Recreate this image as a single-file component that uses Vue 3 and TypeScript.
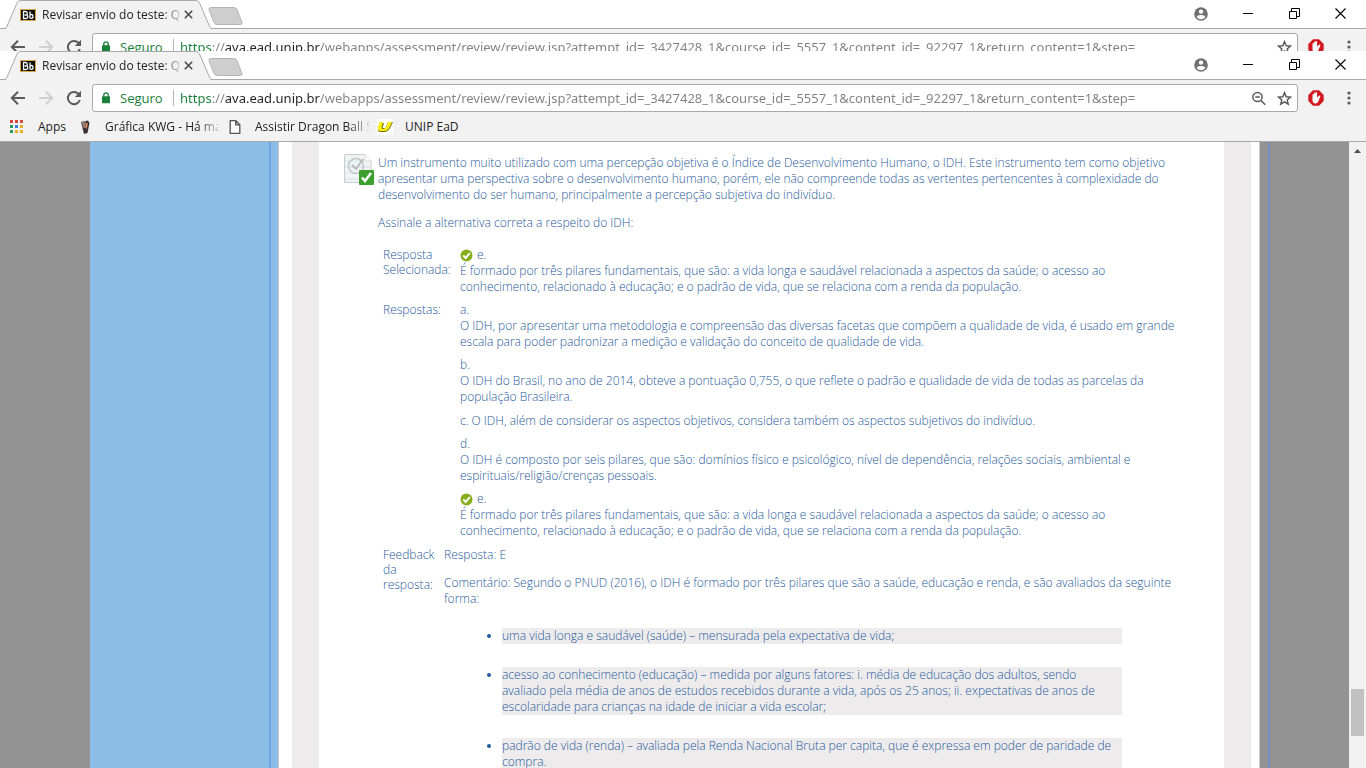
<script setup lang="ts">
interface BrowserWindow {
  id: string
  front: boolean
}

interface Answer {
  letter: string
  text: string
  correct?: boolean
  inline?: boolean
}

const windows: BrowserWindow[] = [
  { id: 'back', front: false },
  { id: 'front', front: true },
]

const tabTitle = 'Revisar envio do teste: QU'
const address =
  'https://ava.ead.unip.br/webapps/assessment/review/review.jsp?attempt_id=_3427428_1&course_id=_5557_1&content_id=_92297_1&return_content=1&step='

const appDots: string[] = [
  '#d8473c', '#d8473c', '#d8473c',
  '#2e9a5c', '#3f7fe0', '#e8b020',
  '#2e9a5c', '#e8b020', '#e8b020',
]

const correctText =
  'É formado por três pilares fundamentais, que são: a vida longa e saudável relacionada a aspectos da saúde; o acesso ao\nconhecimento, relacionado à educação; e o padrão de vida, que se relaciona com a renda da população.'

const selected: Answer = { letter: 'e.', text: correctText, correct: true }

const answers: Answer[] = [
  {
    letter: 'a.',
    text: 'O IDH, por apresentar uma metodologia e compreensão das diversas facetas que compõem a qualidade de vida, é usado em grande\nescala para poder padronizar a medição e validação do conceito de qualidade de vida.',
  },
  {
    letter: 'b.',
    text: 'O IDH do Brasil, no ano de 2014, obteve a pontuação 0,755, o que reflete o padrão e qualidade de vida de todas as parcelas da\npopulação Brasileira.',
  },
  {
    letter: 'c.',
    text: 'O IDH, além de considerar os aspectos objetivos, considera também os aspectos subjetivos do indivíduo.',
    inline: true,
  },
  {
    letter: 'd.',
    text: 'O IDH é composto por seis pilares, que são: domínios físico e psicológico, nível de dependência, relações sociais, ambiental e\nespirituais/religião/crenças pessoais.',
  },
  { letter: 'e.', text: correctText, correct: true },
]

const factors: string[] = [
  'uma vida longa e saudável (saúde) – mensurada pela expectativa de vida;',
  'acesso ao conhecimento (educação) – medida por alguns fatores: i. média de educação dos adultos, sendo\navaliado pela média de anos de estudos recebidos durante a vida, após os 25 anos; ii. expectativas de anos de\nescolaridade para crianças na idade de iniciar a vida escolar;',
  'padrão de vida (renda) – avaliada pela Renda Nacional Bruta per capita, que é expressa em poder de paridade de\ncompra.',
]
</script>

<template>
  <div class="screen">
    <header v-for="w in windows" :key="w.id" class="window" :class="w.id">
      <div class="strip">
        <div class="tab">
          <svg class="tab-shape" width="214" height="29" viewBox="0 0 214 29" aria-hidden="true">
            <path d="M0 28.5H4C6 28.5 6.500 27.500 7.500 25L17 3C18 1 18.500 .5 21 .5H195C198 .5 199 1.500 200 4L209 25C210 27.500 210.500 28.500 213 28.500" fill="#f2f2f2" stroke="#a9a9a9" />
            <path d="M6 28.5H210" stroke="#f2f2f2" />
          </svg>
          <svg class="fav" width="16" height="12" viewBox="0 0 16 12" aria-hidden="true">
            <rect x=".5" y=".5" width="15" height="11" fill="#0c0c0c" stroke="#d9a441" />
            <path d="M3.500 2.500V9.500H6Q8 9.300 7.800 7.500Q7.700 6.200 6.500 5.900Q7.400 5.400 7.300 4.200Q7.200 2.600 5.500 2.500ZM4.500 6H6M10 2.500V9.500M10 6Q13 4.500 13 7.500Q13 10 10 9" fill="none" stroke="#fff" stroke-width="1.300" />
          </svg>
          <span class="tab-title">{{ tabTitle }}</span>
          <button class="icon tab-close" type="button" aria-label="Fechar guia">
            <svg width="9" height="9" viewBox="0 0 9 9"><path d="M.8 .8L8.200 8.200M8.200 .8L.8 8.200" stroke="#4c4c4c" stroke-width="1.600" /></svg>
          </button>
        </div>
        <button class="icon new-tab" type="button" aria-label="Nova guia">
          <svg width="35" height="19" viewBox="0 0 35 19"><path d="M3 .5H26Q28 .5 29 2.500L34 15.500Q34.500 17.500 32.500 17.500H9Q7 17.500 6 15.500L1 3Q.5 .5 3 .5Z" fill="#cecece" stroke="#b4b4b4" /></svg>
        </button>
        <div class="controls">
          <button class="icon" type="button" aria-label="Perfil">
            <svg width="14" height="14" viewBox="0 0 14 14"><circle cx="7" cy="7" r="6.800" fill="#707070" /><circle cx="7" cy="4.600" r="2.200" fill="#fff" /><path d="M2.700 10Q3 7.900 7 7.900T11.300 10Q9.700 12.200 7 12.200T2.700 10Z" fill="#fff" /></svg>
          </button>
          <button class="icon" type="button" aria-label="Minimizar">
            <svg width="11" height="11" viewBox="0 0 11 11"><path d="M0 5.500H10" stroke="#000" /></svg>
          </button>
          <button class="icon" type="button" aria-label="Restaurar">
            <svg width="11" height="11" viewBox="0 0 11 11"><path d="M.5 3.500H7.500V10.500H.5ZM2.500 3V.5H10.500V8.500H8" fill="none" stroke="#000" /></svg>
          </button>
          <button class="icon" type="button" aria-label="Fechar">
            <svg width="11" height="11" viewBox="0 0 11 11"><path d="M.5 .5L10.500 10.500M10.500 .5L.5 10.500" stroke="#000" stroke-width="1.100" /></svg>
          </button>
        </div>
      </div>

      <div class="toolbar">
        <button class="icon nav" type="button" aria-label="Voltar">
          <svg width="16" height="16" viewBox="0 0 16 16"><path d="M15 8H2.500M8 1.800L1.800 8L8 14.200" fill="none" stroke="#5a5a5a" stroke-width="2" /></svg>
        </button>
        <button class="icon nav" type="button" aria-label="Avançar" disabled>
          <svg width="16" height="16" viewBox="0 0 16 16"><path d="M1 8H13.500M8 1.800L14.200 8L8 14.200" fill="none" stroke="#d0d0d0" stroke-width="2" /></svg>
        </button>
        <button class="icon nav" type="button" aria-label="Recarregar">
          <svg width="16" height="16" viewBox="0 0 16 16"><path d="M13.800 10A6.100 6.100 0 1 1 12.400 3.800L13 4.500" fill="none" stroke="#5a5a5a" stroke-width="2" /><path d="M15 .8V7H8.800Z" fill="#5a5a5a" /></svg>
        </button>
        <div class="omnibox">
          <svg class="lock" width="8" height="12" viewBox="0 0 8 12" aria-hidden="true"><path d="M1.800 5V3A2.200 2.200 0 0 1 6.200 3V5" fill="none" stroke="#188038" stroke-width="1.300" /><rect y="4.300" width="8" height="7" rx=".8" fill="#188038" /></svg>
          <span class="secure">Seguro</span>
          <input class="url" type="text" :value="address" aria-label="Endereço" spellcheck="false" />
          <button v-if="w.front" class="icon" type="button" aria-label="Zoom">
            <svg width="15" height="15" viewBox="0 0 15 15"><circle cx="5.500" cy="6" r="4.600" fill="none" stroke="#5a5a5a" stroke-width="1.500" /><path d="M3.300 6H7.800M9 9.500L13.200 13.700" stroke="#5a5a5a" stroke-width="1.600" /></svg>
          </button>
          <button class="icon" type="button" aria-label="Favoritar">
            <svg width="15" height="15" viewBox="0 0 15 15"><path d="M7.500 1.700L9.200 5.700L13.500 6.100L10.200 9L11.200 13.200L7.500 10.900L3.800 13.200L4.800 9L1.500 6.100L5.800 5.700Z" fill="none" stroke="#5a5a5a" stroke-width="1.500" /></svg>
          </button>
        </div>
        <button class="icon ext" type="button" aria-label="Extensão">
          <svg width="16" height="16" viewBox="0 0 16 16"><path d="M5 .3H11L15.700 5V11L11 15.700H5L.3 11V5Z" fill="#d3181f" /><path d="M4.500 8V4.500Q5.200 3.500 6 4.500V3Q6.800 2 7.500 3V2.500Q8.400 1.600 9.100 2.600V7.500L11.500 5.500Q12.600 5.300 12.300 6.400L10 12Q9 13.600 7 13.500Q4.500 13 4.500 10Z" fill="#fff" /></svg>
        </button>
        <button class="icon menu" type="button" aria-label="Menu">
          <svg width="4" height="14" viewBox="0 0 4 14" fill="#5a5a5a"><circle cx="2" cy="2" r="1.600" /><circle cx="2" cy="7" r="1.600" /><circle cx="2" cy="12" r="1.600" /></svg>
        </button>
      </div>

      <nav v-if="w.front" class="bookmarks">
        <a href="#" class="apps">
          <svg width="13" height="13" viewBox="0 0 13 13" aria-hidden="true"><rect v-for="(c, i) in appDots" :key="i" :x="(i % 3) * 5" :y="Math.floor(i / 3) * 5" width="3" height="3" :fill="c" /></svg>
          <span>Apps</span>
        </a>
        <a href="#" class="grafica">
          <svg width="16" height="16" viewBox="0 0 16 16" aria-hidden="true"><path d="M4 3L11 1.500L12.500 4L10.500 14L7 15Z" fill="#3a3038" /><path d="M4 3L8.500 2L9 4L8 9L6.500 9Z" fill="#8d7b78" /><path d="M9.500 4L11 4.500L9.500 10L8 8Z" fill="#e58a58" /></svg>
          <span class="fade">Gráfica KWG - Há ma</span>
        </a>
        <a href="#" class="dragon">
          <svg width="12" height="14" viewBox="0 0 12 14" aria-hidden="true"><path d="M1.200 .7H6.800L10.800 4.700V13.300H1.200ZM6.700 .7V4.800H10.800" fill="#fff" stroke="#555" stroke-width="1.300" /></svg>
          <span class="fade">Assistir Dragon Ball S</span>
        </a>
        <a href="#" class="unip">
          <svg width="16" height="16" viewBox="0 0 16 16" aria-hidden="true"><rect width="16" height="16" fill="#fff" /><path d="M3 4H7L5.500 9H8.500L11 3H16L13 9Q11.500 12.500 8 13H3Q0 12.500 1.200 9Z" fill="#77730c" /><path d="M2.500 3H6L4.500 8.500Q4.500 10 6.500 10Q8.500 9.500 9.500 7L11 3H15L12 9Q10.500 12 7.500 12H3Q0 11.500 1 8Z" fill="#f7ee18" /></svg>
          <span>UNIP EaD</span>
        </a>
      </nav>
    </header>

    <div class="viewport">
      <div class="gutter"></div>
      <aside class="side"></aside>
      <div class="frame">
        <main class="content">
          <svg class="question-icon" width="31" height="33" viewBox="0 0 31 33" aria-hidden="true">
            <path d="M2 1.500H22L28 8V29.500H1.500V3Q1.500 1.500 2 1.500Z" fill="#f1f4f5" stroke="#c9cccd" />
            <path d="M22 1.500V8H28" fill="#fff" stroke="#d5d7d8" />
            <path d="M2 8H21M2 14H27M2 20H16M2 26H15" stroke="#d3e4ea" />
            <circle cx="13" cy="13" r="7.500" fill="none" stroke="#c3c5c6" stroke-width="1.500" />
            <path d="M9 12L13 16L20 6" fill="none" stroke="#b9bbbc" stroke-width="2" />
            <rect x="16" y="17" width="15" height="15" rx="1" fill="#3d9f2d" />
            <path d="M19 24.500L22 28L28 20" fill="none" stroke="#fff" stroke-width="2.500" />
          </svg>
          <div class="question">
            <p>Um instrumento muito utilizado com uma percepção objetiva é o Índice de Desenvolvimento Humano, o IDH. Este instrumento tem como objetivo<br>apresentar uma perspectiva sobre o desenvolvimento humano, porém, ele não compreende todas as vertentes pertencentes à complexidade do<br>desenvolvimento do ser humano, principalmente a percepção subjetiva do indivíduo.</p>
            <p>Assinale a alternativa correta a respeito do IDH:</p>

            <dl class="rows">
              <div class="row">
                <dt>Resposta<br>Selecionada:</dt>
                <dd>
                  <div class="letter">
                    <svg class="ok" width="13" height="13" viewBox="0 0 13 13" aria-label="Correta"><circle cx="6.500" cy="6.500" r="6" fill="#86ad1c" /><path d="M3.300 6.500L5.700 9L9.800 4" fill="none" stroke="#fff" stroke-width="1.900" /></svg>{{ selected.letter }}
                  </div>
                  <div>{{ selected.text }}</div>
                </dd>
              </div>
              <div class="row">
                <dt>Respostas:</dt>
                <dd class="answers">
                  <div v-for="a in answers" :key="a.letter" :class="{ inline: a.inline }">
                    <div class="letter">
                      <svg v-if="a.correct" class="ok" width="13" height="13" viewBox="0 0 13 13" aria-label="Correta"><circle cx="6.500" cy="6.500" r="6" fill="#86ad1c" /><path d="M3.300 6.500L5.700 9L9.800 4" fill="none" stroke="#fff" stroke-width="1.900" /></svg>{{ a.letter }}
                    </div>
                    <div>{{ a.text }}</div>
                  </div>
                </dd>
              </div>
              <div class="row feedback">
                <dt>Feedback<br>da<br>resposta:</dt>
                <dd>
                  <p>Resposta: E</p>
                  <p>Comentário: Segundo o PNUD (2016), o IDH é formado por três pilares que são a saúde, educação e renda, e são avaliados da seguinte<br>forma:</p>
                  <ul>
                    <li v-for="f in factors" :key="f">{{ f }}</li>
                  </ul>
                </dd>
              </div>
            </dl>
          </div>
        </main>
      </div>
      <div class="gutter right"></div>
      <div class="scrollbar">
        <svg class="arrow" width="7" height="4" viewBox="0 0 7 4" aria-hidden="true"><path d="M0 4L3.500 0L7 4Z" fill="#505050" /></svg>
        <div class="thumb"></div>
      </div>
    </div>
  </div>
</template>

<style>
body {
  background: #fff;
}
</style>

<style scoped>
* {
  box-sizing: border-box;
}
.screen {
  display: flex;
  flex-direction: column;
  height: 100vh;
  overflow: hidden;
  font-family: "Open Sans", "Noto Sans", sans-serif;
  font-size: 12px;
}
.icon {
  display: flex;
  flex: none;
  padding: 0;
  border: 0;
  background: none;
}
.window {
  flex: none;
  overflow: hidden;
  background: #f2f2f2;
  color: #222;
}
.window.back {
  height: 51px;
}
.strip {
  display: flex;
  height: 29px;
  background: #fff;
  box-shadow: inset 0 -1px #a9a9a9;
}
.tab {
  position: relative;
  display: flex;
  align-items: center;
  width: 214px;
  padding-left: 20px;
}
.tab-shape {
  position: absolute;
  left: 0;
  top: 0;
}
.fav,
.tab-title,
.tab-close {
  position: relative;
  flex: none;
}
.tab-title {
  width: 137px;
  margin: 0 5px 0 6px;
  overflow: hidden;
  color: #222;
  white-space: nowrap;
  mask-image: linear-gradient(90deg, #000 120px, transparent 142px);
}
.new-tab {
  align-self: flex-start;
  margin: 7px 0 0 -6px;
}
.controls {
  display: flex;
  align-items: center;
  gap: 35px;
  margin-left: auto;
  padding: 0 20px 2px 0;
}
.toolbar {
  display: flex;
  align-items: center;
  height: 36px;
  padding: 0 15px 0 10px;
}
.nav {
  margin-right: 12px;
}
.nav:nth-child(3) {
  margin-right: 10px;
}
.omnibox {
  display: flex;
  flex: 1;
  align-items: center;
  gap: 10px;
  height: 28px;
  padding: 0 5px 0 9px;
  border: 1px solid #a9a9a9;
  border-radius: 3px;
  background: #fff;
  font-size: 13px;
}
.secure {
  width: 54px;
  margin-right: -4px;
  border-right: 1px solid #b5b5b5;
  color: #188038;
  line-height: 16px;
}
.url {
  flex: 1;
  min-width: 0;
  padding: 0;
  border: 0;
  outline: 0;
  font-family: "Noto Sans", "Open Sans", sans-serif;
  font-size: 13px;
  color: #808080;
  background: linear-gradient(90deg, #188038 32px, #808080 32px 45px, #222 45px 140px, #808080 140px);
  -webkit-background-clip: text;
  background-clip: text;
  -webkit-text-fill-color: transparent;
}
.ext {
  margin-left: 10px;
}
.menu {
  margin-left: 23px;
}
.bookmarks {
  display: flex;
  align-items: center;
  height: 26px;
  padding: 0 10px 4px;
  border-bottom: 1px solid #a9a9a9;
}
.bookmarks a {
  display: flex;
  flex: none;
  align-items: center;
  color: #222;
  text-decoration: none;
  white-space: nowrap;
}
.bookmarks .apps {
  gap: 15px;
  width: 67px;
}
.bookmarks .grafica {
  gap: 12px;
  width: 152px;
}
.bookmarks .dragon {
  gap: 14px;
  width: 148px;
}
.bookmarks .unip {
  gap: 12px;
}
.fade {
  width: 114px;
  overflow: hidden;
  mask-image: linear-gradient(90deg, #000 92px, transparent 118px);
}
.viewport {
  display: flex;
  flex: 1;
  min-height: 0;
  overflow: hidden;
  background: #fff;
}
.gutter {
  flex: none;
  width: 90px;
  background: #939393;
}
.gutter.right {
  width: 89px;
  padding-left: 8px;
}
.gutter.right::before {
  content: "";
  display: block;
  width: 2px;
  height: 100%;
  background: #7590c0;
}
.side {
  flex: none;
  width: 189px;
  padding-left: 179px;
  border-right: 1px solid #c9c9c9;
  background: #8bbde6;
}
.side::before {
  content: "";
  display: block;
  width: 2px;
  height: 100%;
  background: #6fa5e6;
}
.frame {
  display: flex;
  flex: 1;
  min-width: 0;
  padding: 0 8px 0 13px;
  border-right: 1px solid #c9c9c9;
}
.content {
  display: flex;
  flex: 1;
  min-width: 0;
  align-items: flex-start;
  gap: 4px;
  padding: 13px 0 0 24px;
  border: solid #edebec;
  border-width: 0 27px;
  color: #1f5a9c;
  font-weight: 300;
  line-height: 16px;
}
.question-icon {
  flex: none;
  margin-top: -2px;
}
.question {
  flex: 1;
  min-width: 0;
  white-space: pre;
}
.question p {
  margin: 0 0 12px;
}
.rows {
  margin: 16px 0 0 5px;
}
.row {
  display: flex;
  margin-bottom: 7px;
}
dt {
  flex: none;
  width: 77px;
  line-height: 15px;
}
dd {
  flex: 1;
  min-width: 0;
  margin: 0;
}
.letter {
  display: flex;
  align-items: center;
  gap: 4px;
  white-space: normal;
}
.answers {
  display: flex;
  flex-direction: column;
  gap: 7px;
  padding-bottom: 1px;
}
.inline {
  display: flex;
  gap: 3px;
  padding-top: 1px;
}
.feedback dt {
  width: 61px;
}
.feedback ul {
  display: flex;
  flex-direction: column;
  gap: 23px;
  margin: 21px 102px 0 58px;
  padding: 0;
  white-space: normal;
}
.feedback li {
  background: #edebec;
  white-space: pre;
}
.scrollbar {
  display: flex;
  flex: none;
  flex-direction: column;
  align-items: center;
  justify-content: space-between;
  width: 17px;
  padding: 7px 0 32px;
  background: #f1f1f1;
}
.thumb {
  width: 13px;
  height: 47px;
  background: #c1c1c1;
}
</style>
